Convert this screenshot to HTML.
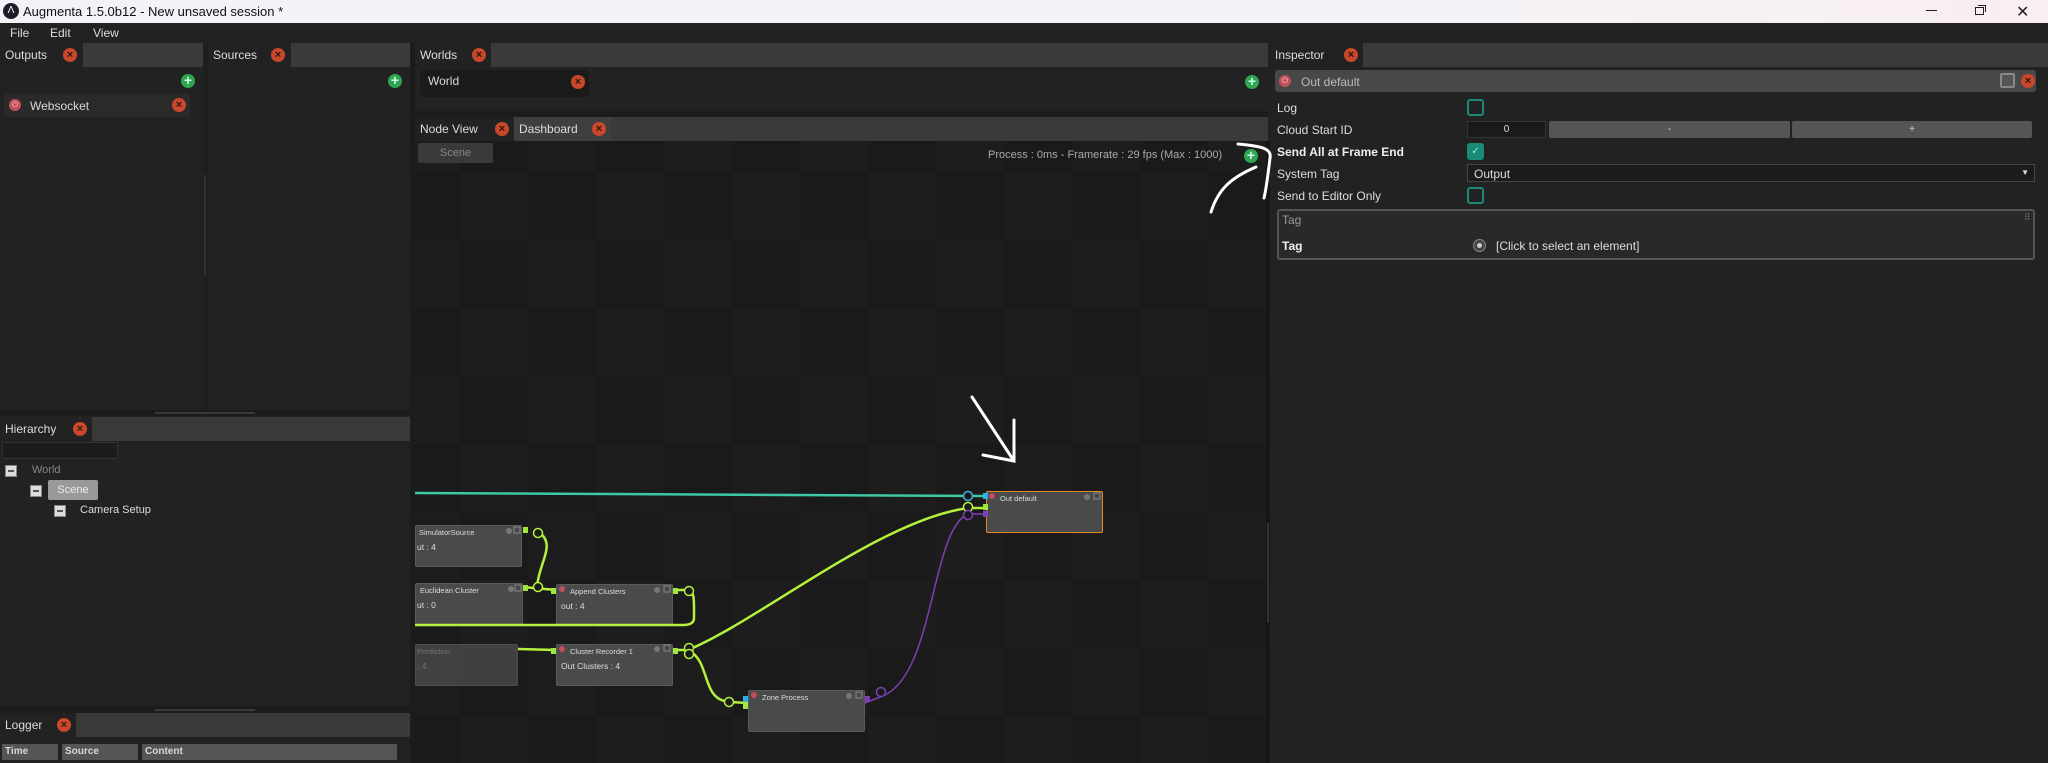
<!DOCTYPE html>
<html><head><meta charset="utf-8">
<style>
*{margin:0;padding:0;box-sizing:border-box}
body{width:2048px;height:763px;overflow:hidden;background:#222;font-family:"Liberation Sans",sans-serif;color:#d8d8d8;position:relative;font-size:12px}
.a{position:absolute}
.hdr{position:absolute;height:24px;background:#3a3a3a}
.tab{position:absolute;top:0;height:24px;background:#222;padding:5px 5px;font-size:12px;color:#ddd;white-space:nowrap}
.x{display:inline-block;width:14px;height:14px;border-radius:50%;background:#c9472a;color:#2a1a10;font-size:11px;line-height:14px;text-align:center;font-weight:bold;position:absolute}
.plus{position:absolute;width:14px;height:14px;border-radius:50%;background:#2fa550;color:#cfe;font-size:14px;line-height:13px;text-align:center;font-weight:bold}
.cb{position:absolute;width:17px;height:17px;border:2px solid #1c8a78;border-radius:3px}
.lbl{position:absolute;left:1277px;font-size:12px;color:#ddd}
.node{position:absolute;background:#4a4a4a;border:1px solid #5a5a5a;border-radius:2px}
.nt{position:absolute;top:2px;font-size:7.5px;color:#ddd;white-space:nowrap}
.nv{position:absolute;top:16px;left:4px;font-size:8.5px;color:#ddd}
</style></head><body>
<div class="a" style="left:0;top:0;width:2048px;height:23px;background:linear-gradient(90deg,#f1f3f9,#f4f2f6 70%,#f9eef2)"></div>
<div class="a" style="left:3px;top:3px;width:16px;height:16px;border-radius:50%;background:#1d1d2a;color:#fff;font-size:10px;text-align:center;line-height:16px">Λ</div>
<div class="a" style="left:23px;top:4px;font-size:13px;color:#111">Augmenta 1.5.0b12 - New unsaved session *</div>
<div class="a" style="left:1926px;top:10px;width:11px;height:1px;background:#222"></div>
<div class="a" style="left:1975px;top:7px;width:9px;height:8px;border:1px solid #222"></div>
<div class="a" style="left:1978px;top:5px;width:8px;height:7px;border-top:1px solid #222;border-right:1px solid #222"></div>
<div class="a" style="left:2016px;top:2px;font-size:16px;color:#222">✕</div>
<div class="a" style="left:0;top:23px;width:2048px;height:20px;background:#222"></div>
<div class="a" style="left:10px;top:26px;color:#ddd">File</div>
<div class="a" style="left:50px;top:26px;color:#ddd">Edit</div>
<div class="a" style="left:93px;top:26px;color:#ddd">View</div>

<div class="hdr" style="left:0;top:43px;width:203px"><div class="tab" style="left:0;width:83px">Outputs<span class="x" style="left:63px;top:5px">×</span></div></div>
<div class="plus" style="left:181px;top:74px">+</div>
<div class="a" style="left:4px;top:94px;width:186px;height:23px;background:#2a2a2a;border-radius:3px"></div>
<div class="a" style="left:9px;top:99px;width:12px;height:12px;border-radius:50%;background:#c0505a;color:#fcc;font-size:8px;text-align:center;line-height:12px">⏻</div>
<div class="a" style="left:30px;top:99px">Websocket</div>
<span class="x" style="left:172px;top:98px">×</span>
<div class="a" style="left:203px;top:43px;width:5px;height:370px;background:#1e1e1e"></div>
<div class="a" style="left:204px;top:175px;width:2px;height:100px;background:#333"></div>
<div class="hdr" style="left:208px;top:43px;width:202px"><div class="tab" style="left:0;width:83px">Sources<span class="x" style="left:63px;top:5px">×</span></div></div>
<div class="plus" style="left:388px;top:74px">+</div>
<div class="a" style="left:0;top:410px;width:410px;height:6px;background:#1c1c1c"></div>
<div class="a" style="left:155px;top:412px;width:100px;height:2px;background:#3a3a3a"></div>
<div class="hdr" style="left:0;top:417px;width:410px"><div class="tab" style="left:0;width:92px">Hierarchy<span class="x" style="left:73px;top:5px">×</span></div></div>
<div class="a" style="left:2px;top:442px;width:116px;height:17px;background:#1c1c1c;border:1px solid #333"></div>
<div class="a" style="left:5px;top:465px;width:12px;height:12px;background:#ddd;border:1px solid #888"><div class="a" style="left:2px;top:4px;width:6px;height:2px;background:#555"></div></div>
<div class="a" style="left:32px;top:464px;color:#888;font-size:11px">World</div>
<div class="a" style="left:30px;top:485px;width:12px;height:12px;background:#ddd;border:1px solid #888"><div class="a" style="left:2px;top:4px;width:6px;height:2px;background:#555"></div></div>
<div class="a" style="left:48px;top:480px;width:50px;height:20px;background:#999;border-radius:2px;color:#eee;font-size:11px;text-align:center;line-height:20px">Scene</div>
<div class="a" style="left:54px;top:505px;width:12px;height:12px;background:#ddd;border:1px solid #888"><div class="a" style="left:2px;top:4px;width:6px;height:2px;background:#555"></div></div>
<div class="a" style="left:80px;top:504px;font-size:11px;color:#ddd">Camera Setup</div>
<div class="a" style="left:0;top:706px;width:410px;height:7px;background:#1c1c1c"></div>
<div class="a" style="left:155px;top:709px;width:100px;height:2px;background:#3a3a3a"></div>
<div class="hdr" style="left:0;top:713px;width:410px"><div class="tab" style="left:0;width:76px">Logger<span class="x" style="left:57px;top:5px">×</span></div></div>
<div class="a" style="left:2px;top:744px;width:56px;height:16px;background:#555;font-size:10px;font-weight:bold;padding:2px 3px">Time</div>
<div class="a" style="left:62px;top:744px;width:76px;height:16px;background:#555;font-size:10px;font-weight:bold;padding:2px 3px">Source</div>
<div class="a" style="left:142px;top:744px;width:255px;height:16px;background:#555;font-size:10px;font-weight:bold;padding:2px 3px">Content</div>
<div class="a" style="left:410px;top:43px;width:5px;height:720px;background:#1c1c1c"></div>

<div class="hdr" style="left:415px;top:43px;width:853px"><div class="tab" style="left:0;width:76px">Worlds<span class="x" style="left:57px;top:5px">×</span></div></div>
<div class="a" style="left:420px;top:70px;width:169px;height:27px;background:#1b1b1b;border-radius:3px"></div>
<div class="a" style="left:428px;top:74px">World</div>
<span class="x" style="left:571px;top:75px">×</span>
<div class="plus" style="left:1245px;top:75px">+</div>
<div class="a" style="left:415px;top:111px;width:853px;height:6px;background:#1c1c1c"></div>
<div class="hdr" style="left:415px;top:117px;width:853px"><div class="tab" style="left:0;width:99px">Node View<span class="x" style="left:80px;top:5px">×</span></div><div class="tab" style="left:99px;width:97px;background:#3f3f3f">Dashboard<span class="x" style="left:78px;top:5px">×</span></div></div>
<svg class="a" style="left:415px;top:141px" width="853" height="622">
<defs><pattern id="g" x="45" y="31" width="136" height="136" patternUnits="userSpaceOnUse"><rect width="68" height="68" fill="#1d1d1d"/><rect x="68" y="68" width="68" height="68" fill="#1d1d1d"/></pattern></defs>
<rect width="853" height="622" fill="#1a1a1a"/><rect width="853" height="622" fill="url(#g)"/>
</svg>
<div class="a" style="left:418px;top:143px;width:75px;height:20px;background:#3a3a3a;border-radius:2px;color:#888;font-size:11px;text-align:center;line-height:20px">Scene</div>
<div class="a" style="left:988px;top:149px;font-size:11px;color:#aaa">Process : 0ms - Framerate : 29 fps (Max : 1000)</div>
<div class="plus" style="left:1244px;top:149px">+</div>

<div class="node" style="left:415px;top:525px;width:107px;height:42px"><div class="nt" style="left:3px">SimulatorSource</div><div class="nv" style="left:1px">ut : 4</div></div>
<div class="node" style="left:415px;top:583px;width:108px;height:42px"><div class="nt" style="left:4px">Euclidean Cluster</div><div class="nv" style="left:1px">ut : 0</div></div>
<div class="node" style="left:556px;top:584px;width:117px;height:42px"><div class="nt" style="left:13px">Append Clusters</div><div class="nv">out : 4</div></div>
<div class="node" style="left:415px;top:644px;width:103px;height:42px;opacity:.8"><div class="nt" style="left:1px;color:#888">Prediction</div><div class="nv" style="left:1px;color:#888">: 4</div></div>
<div class="node" style="left:556px;top:644px;width:117px;height:42px"><div class="nt" style="left:13px">Cluster Recorder 1</div><div class="nv">Out Clusters : 4</div></div>
<div class="node" style="left:748px;top:690px;width:117px;height:42px"><div class="nt" style="left:13px">Zone Process</div></div>
<div class="node" style="left:986px;top:491px;width:117px;height:42px;border:1px solid #e08a2a"><div class="nt" style="left:13px">Out default</div></div>
<svg class="a" style="left:0;top:0" width="2048" height="763">
<g fill="#c0505a"><circle cx="562" cy="589" r="3"/><circle cx="562" cy="649" r="3"/><circle cx="754" cy="695" r="3"/><circle cx="992" cy="496" r="3"/></g>
<g fill="#777"><circle cx="509" cy="531" r="3"/><circle cx="511" cy="589" r="3"/><circle cx="657" cy="590" r="3"/><circle cx="657" cy="649" r="3"/><circle cx="849" cy="696" r="3"/><circle cx="1087" cy="497" r="3"/></g>
<g fill="none" stroke="#888" stroke-width="1"><rect x="514" y="527" width="6" height="6"/><rect x="515" y="585" width="6" height="6"/><rect x="664" y="586" width="6" height="6"/><rect x="664" y="645" width="6" height="6"/><rect x="856" y="692" width="6" height="6"/><rect x="1094" y="493" width="6" height="6"/></g>
<g fill="none" stroke-width="2.5">
<path d="M415 493 L983 496" stroke="#3ec8a4"/>
<path d="M539 532 C556 545 540 560 537 586" stroke="#b5f03c"/>
<path d="M523 587 L556 590" stroke="#b5f03c"/>
<path d="M673 590 L688 590 C695 592 694 600 694 618 C694 623 690 625 683 625 L415 625" stroke="#b5f03c"/>
<path d="M518 649 L556 650" stroke="#b5f03c"/>
<path d="M673 650 L688 650 C760 620 880 520 968 508 L986 508" stroke="#b5f03c"/>
<path d="M688 650 C712 662 700 700 730 702 L748 703" stroke="#b5f03c"/>
<path d="M865 703 L880 697 C935 680 930 530 968 514 L986 514" stroke="#7d3fb5" stroke-width="1.5"/>
</g>
<g fill="#1a1a1a" stroke-width="1.5"><circle cx="968" cy="496" r="4.5" stroke="#3ab0e0"/><circle cx="968" cy="507" r="4.5" stroke="#b5f03c"/><circle cx="968" cy="515" r="4.5" stroke="#7d3fb5"/>
<circle cx="538" cy="533" r="4.5" stroke="#b5f03c"/><circle cx="538" cy="587" r="4.5" stroke="#b5f03c"/><circle cx="689" cy="591" r="4.5" stroke="#b5f03c"/><circle cx="689" cy="648" r="4.5" stroke="#b5f03c"/><circle cx="689" cy="654" r="4.5" stroke="#b5f03c"/><circle cx="729" cy="702" r="4.5" stroke="#b5f03c"/><circle cx="881" cy="692" r="4.5" stroke="#7d3fb5"/></g>
<g><rect x="983" y="493" width="5" height="6" fill="#2ab0e8"/><rect x="983" y="504" width="5" height="6" fill="#9fe640"/><rect x="983" y="511" width="5" height="6" fill="#7d3fb5"/><rect x="743" y="696" width="5" height="6" fill="#2ab0e8"/><rect x="743" y="703" width="5" height="6" fill="#9fe640"/><rect x="865" y="696" width="5" height="6" fill="#7d3fb5"/>
<rect x="523" y="527" width="5" height="6" fill="#9fe640"/><rect x="523" y="585" width="5" height="6" fill="#9fe640"/><rect x="551" y="588" width="5" height="6" fill="#9fe640"/><rect x="673" y="588" width="5" height="6" fill="#9fe640"/><rect x="551" y="648" width="5" height="6" fill="#9fe640"/><rect x="673" y="648" width="5" height="6" fill="#9fe640"/></g>
</svg>
<div class="a" style="left:1266px;top:141px;width:4px;height:622px;background:#161616"></div>
<div class="a" style="left:1267px;top:523px;width:2px;height:100px;background:#333"></div>

<div class="a" style="left:1270px;top:43px;width:778px;height:720px;background:#222"></div>
<div class="hdr" style="left:1270px;top:43px;width:778px"><div class="tab" style="left:0;width:93px">Inspector<span class="x" style="left:74px;top:5px">×</span></div></div>
<div class="a" style="left:1275px;top:70px;width:761px;height:22px;background:#484848;border-radius:3px"></div>
<div class="a" style="left:1279px;top:75px;width:12px;height:12px;border-radius:50%;background:#c0505a;color:#fcc;font-size:8px;text-align:center;line-height:12px">⏻</div>
<div class="a" style="left:1301px;top:75px;color:#bbb">Out default</div>
<div class="a" style="left:2000px;top:73px;width:15px;height:15px;border:2px solid #888;border-radius:2px;background:#555"></div>
<span class="x" style="left:2021px;top:74px">×</span>
<div class="lbl" style="top:101px">Log</div><div class="cb" style="left:1467px;top:99px"></div>
<div class="lbl" style="top:123px">Cloud Start ID</div>
<div class="a" style="left:1467px;top:121px;width:79px;height:17px;background:#1a1a1a;border:1px solid #333;font-size:10px;text-align:center;line-height:15px">0</div>
<div class="a" style="left:1549px;top:121px;width:241px;height:17px;background:#555;border-radius:2px;font-size:10px;text-align:center;line-height:17px">-</div>
<div class="a" style="left:1792px;top:121px;width:240px;height:17px;background:#555;border-radius:2px;font-size:10px;text-align:center;line-height:17px">+</div>
<div class="lbl" style="top:145px;font-weight:bold;color:#eee">Send All at Frame End</div>
<div class="cb" style="left:1467px;top:143px;background:#1c8a78;color:#9ed;font-size:10px;text-align:center;line-height:13px">✓</div>
<div class="lbl" style="top:167px">System Tag</div>
<div class="a" style="left:1467px;top:164px;width:568px;height:18px;background:#1c1c1c;border:1px solid #444;padding:2px 6px;color:#ddd">Output<span style="position:absolute;right:5px;top:3px;font-size:8px">▼</span></div>
<div class="lbl" style="top:189px">Send to Editor Only</div><div class="cb" style="left:1467px;top:187px"></div>
<div class="a" style="left:1277px;top:209px;width:758px;height:51px;border:2px solid #555;border-radius:3px;background:#292929"></div>
<div class="a" style="left:1282px;top:213px;color:#999;font-size:12px">Tag</div>
<div class="a" style="left:2024px;top:212px;color:#777;font-size:9px">⠿</div>
<div class="a" style="left:1282px;top:239px;font-weight:bold;color:#eee;font-size:12px">Tag</div>
<div class="a" style="left:1473px;top:239px;width:13px;height:13px;border-radius:50%;background:#444;border:1px solid #888"><div class="a" style="left:3px;top:3px;width:5px;height:5px;border-radius:50%;background:#ccc"></div></div>
<div class="a" style="left:1496px;top:239px;font-size:12px;color:#ddd">[Click to select an element]</div>
<svg class="a" style="left:0;top:0" width="2048" height="763">
<g fill="none" stroke="#fff" stroke-width="3" stroke-linecap="round">
<path d="M1238 144 C1260 146 1272 148 1270 158 C1268 175 1266 190 1264 198"/>
<path d="M1256 167 C1230 178 1218 190 1211 212"/>
<path d="M972 397 L1012 458"/><path d="M1014 420 L1014 461 L983 455"/>
</g>
</svg>
</body></html>
